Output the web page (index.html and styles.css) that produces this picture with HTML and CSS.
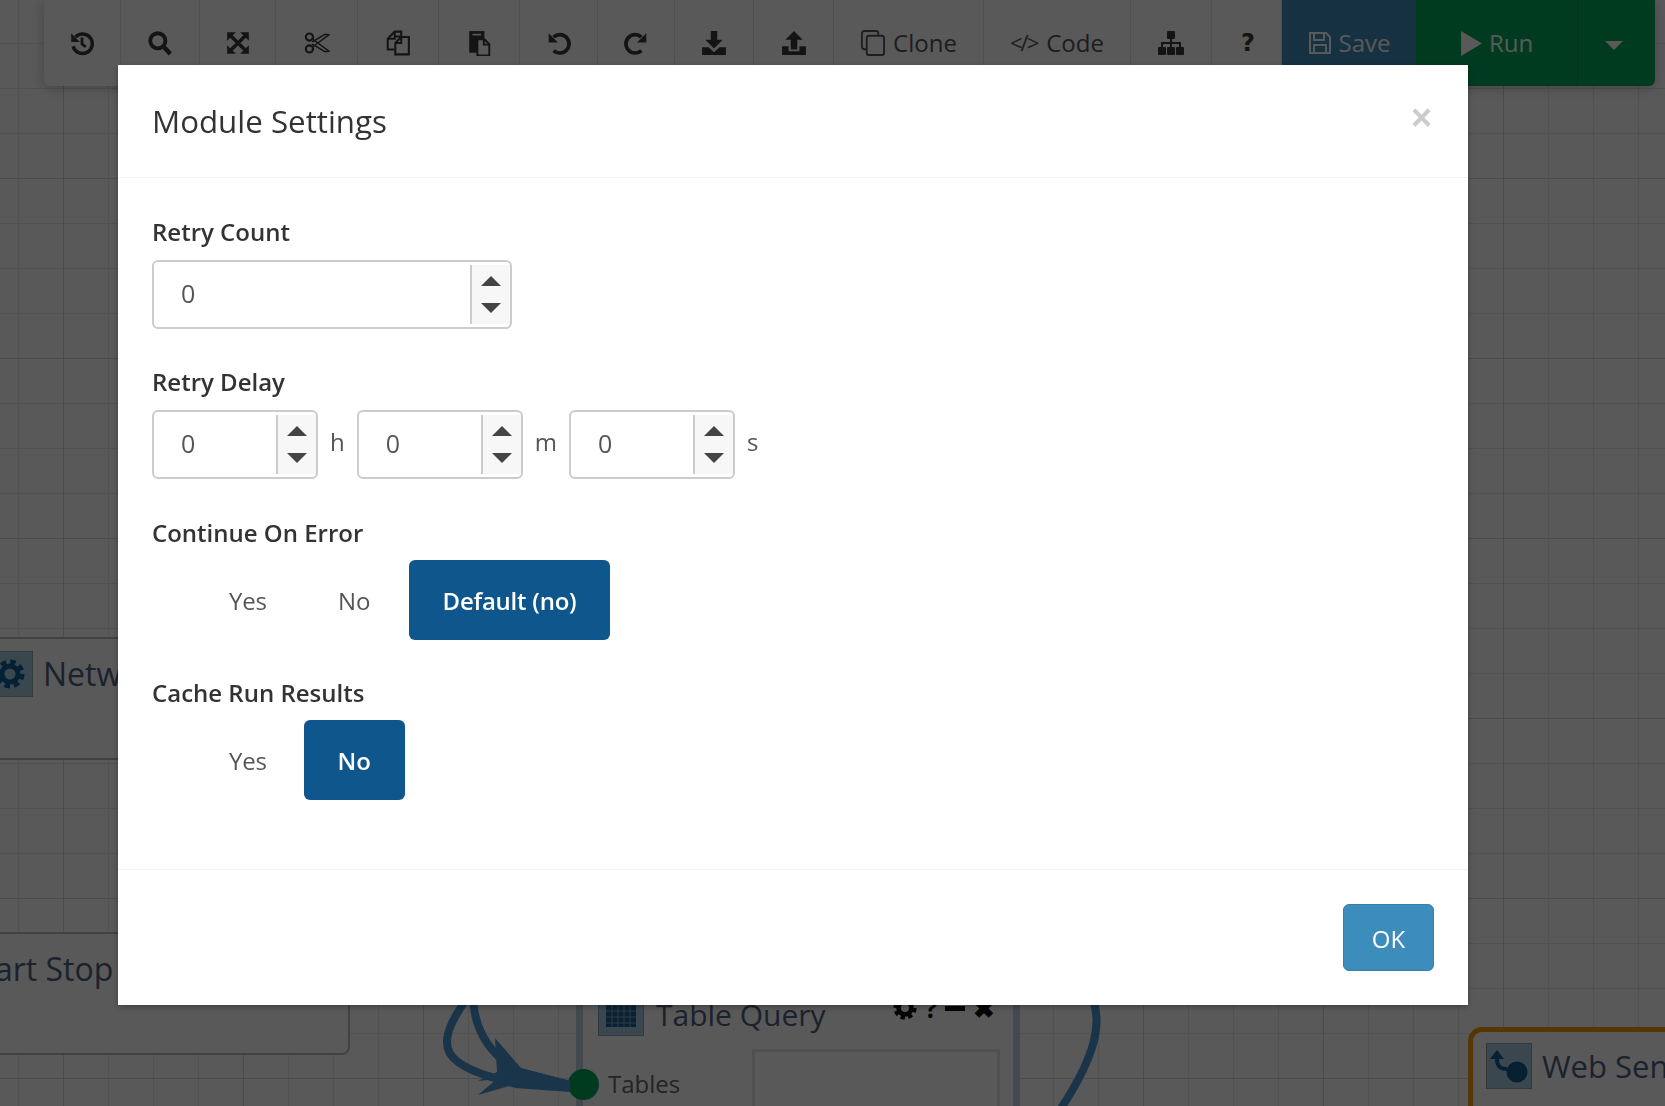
FILE: index.html
```html
<!DOCTYPE html>
<html lang="en">
<head>
    <meta charset="UTF-8">
    <meta name="viewport" content="width=device-width, initial-scale=1.0">
    <title>Module Settings</title>
    <link rel="stylesheet" href="styles.css">
</head>
<body>
    <div class="canvas">
        <svg class="wires" width="1665" height="1106" viewBox="0 0 1665 1106">
            <path d="M473 990C472 1020 482 1050 519 1072L570 1085" />
            <path d="M466 1000C448 1025 438 1048 458 1062C475 1074 495 1078 516 1084L570 1088" />
            <path d="M1088 990C1107 1020 1093 1060 1060 1110" />
            <polygon points="495,1038 521,1068 570,1081 570,1089 516,1084 478,1095 497,1079 478,1081 497,1072" />
        </svg>

        <div class="node node-network">
            <span class="node-icon">
                <svg width="30" height="30" viewBox="0 0 30 30"><circle cx="15" cy="15" r="8" fill="none" stroke="currentColor" stroke-width="5"/><circle cx="15" cy="15" r="12" fill="none" stroke="currentColor" stroke-width="5" stroke-dasharray="5.4 4"/></svg>
            </span>
            <span class="node-title">Network</span>
        </div>

        <div class="node node-start">
            <span class="node-title">Start Stop</span>
        </div>

        <div class="node node-query">
            <span class="node-icon">
                <svg width="32" height="30" viewBox="0 0 32 30"><rect x="1" y="1" width="30" height="28" fill="#1f5f96"/><path d="M1 7H31M1 13H31M1 19H31M1 25H31M7 1V29M13 1V29M19 1V29M25 1V29" stroke="#7fa6c8" stroke-width="1"/></svg>
            </span>
            <span class="node-title">Table Query</span>
            <span class="node-tools">
                <svg width="24" height="24" viewBox="0 0 30 30"><circle cx="15" cy="15" r="8" fill="none" stroke="currentColor" stroke-width="6"/><circle cx="15" cy="15" r="12" fill="none" stroke="currentColor" stroke-width="5" stroke-dasharray="5.4 4"/></svg>
                <b>?</b>
                <b class="tool-dash"></b>
                <b>&#10006;</b>
            </span>
            <div class="query-box"></div>
            <span class="port-label">Tables</span>
            <span class="port"></span>
        </div>

        <div class="node node-web">
            <span class="node-icon">
                <svg width="40" height="38" viewBox="0 0 40 38"><circle cx="28" cy="25" r="10.5" fill="#0b5c99"/><path d="M18 25H38M28 15C22 20 22 30 28 35M28 15C34 20 34 30 28 35" stroke="#3d5a70" fill="none"/><path d="M18 22C10 22 8 18 8 12" fill="none" stroke="#0b5c99" stroke-width="4"/><polygon points="1,12 8,3 15,12" fill="#0b5c99"/></svg>
            </span>
            <span class="node-title">Web Send</span>
        </div>
    </div>

    <nav class="toolbar">
        <button class="tool">
            <svg class="ic" viewBox="0 0 24 24"><path class="line" stroke-width="3.2" d="M6 6.5A9 9 0 1 1 3.8 15"/><path d="M2 3v8h8z"/><path class="line" stroke-width="2.6" d="M12 7v6l3.5 2.5"/></svg>
        </button>
        <button class="tool">
            <svg class="ic" viewBox="0 0 24 24"><circle class="line" stroke-width="3.6" cx="10" cy="10" r="7"/><path class="line" stroke-width="4.2" d="M15 15l6.5 7"/></svg>
        </button>
        <button class="tool">
            <svg class="ic" viewBox="0 0 24 24"><path d="M2 2h8L2 10zM22 2v8l-8-8zM2 22v-8l8 8zM22 22h-8l8-8z"/><path class="line" stroke-width="3.2" d="M5 5L19 19M19 5L5 19"/></svg>
        </button>
        <button class="tool">
            <svg class="ic" viewBox="0 0 24 24"><circle class="line" stroke-width="2" cx="5" cy="6.5" r="3.3"/><circle class="line" stroke-width="2" cx="5" cy="17.5" r="3.3"/><path class="line" stroke-width="1.3" d="M7.8 8.3L23 19.5l-3.5.5L7.5 13M7.8 15.7L23 4.5 19.5 4 7.5 11"/></svg>
        </button>
        <button class="tool">
            <svg class="ic" viewBox="0 0 24 24"><path class="line" stroke-width="1.9" d="M9 6H15V1.5H9L2.5 8V18H9M9 1.5V8H2.5"/><path class="line" stroke-width="1.9" d="M15 6.5H22V22.5H9.5V12zM15 6.5V12H9.5"/></svg>
        </button>
        <button class="tool">
            <svg class="ic" viewBox="0 0 24 24"><rect x="3" y="1" width="14" height="20"/><path d="M10.5 8.5h6.5l4.500 4.500v10.500h-11z" fill="#fff" stroke="currentColor" stroke-width="1.8"/><path d="M16.500 8.500v5h5" fill="none" stroke="currentColor" stroke-width="1.800"/><rect x="6" y="3.500" width="8" height="1.500" fill="#fff"/></svg>
        </button>
        <button class="tool">
            <svg class="ic" viewBox="0 0 24 24"><path class="line" stroke-width="3.4" d="M7 6.500A8.500 8.500 0 1 1 7 19"/><path d="M2.500 3v8.500h8.500z"/></svg>
        </button>
        <button class="tool">
            <svg class="ic" viewBox="0 0 24 24"><path class="line" stroke-width="3.4" d="M17 6.500A8.500 8.500 0 1 0 17 19"/><path d="M21.500 3v8.500H13z"/></svg>
        </button>
        <button class="tool">
            <svg class="ic" viewBox="0 0 24 24"><path d="M9 1h6v8h5l-8 8-8-8h5z"/><path d="M1 16h6l5 4.500 5-4.500h6v7H1z"/></svg>
        </button>
        <button class="tool">
            <svg class="ic" viewBox="0 0 24 24"><path d="M12 1l8 8h-5v9H9V9H4z"/><path d="M1 15h6v4.500h10V15h6v8H1z"/></svg>
        </button>
        <button class="tool">
            <svg class="ic" viewBox="0 0 25 27"><rect class="line" stroke-width="1.900" x="1" y="1" width="17" height="19" rx="2.500"/><rect x="6" y="6" width="18" height="20" rx="2.500" fill="#fff" stroke="currentColor" stroke-width="1.900"/></svg>
            <span>Clone</span>
        </button>
        <button class="tool">
            <span class="code-mark">&lt;/&gt;</span>
            <span>Code</span>
        </button>
        <button class="tool">
            <svg class="ic" viewBox="0 0 26 24"><rect x="9" y="0" width="8" height="8" rx="1"/><rect x="0" y="16" width="8" height="8" rx="1"/><rect x="9" y="16" width="8" height="8" rx="1"/><rect x="18" y="16" width="8" height="8" rx="1"/><path class="line" stroke-width="2" d="M4 16v-4h18v4M13 8v8"/></svg>
        </button>
        <button class="tool tool-help">?</button>
        <button class="tool tool-save">
            <svg class="ic" viewBox="0 0 24 24"><path class="line" stroke-width="2" d="M2 2H18L22 6V22H2z"/><path class="line" stroke-width="2" d="M6 2V9H16V2M6 22V14H18V22"/></svg>
            <span>Save</span>
        </button>
        <button class="tool tool-run">
            <svg class="ic ic-play" viewBox="0 0 20 24"><path d="M0 0l20 12L0 24z"/></svg>
            <span>Run</span>
        </button>
        <button class="tool tool-run">
            <span class="caret"></span>
        </button>
    </nav>

    <div class="backdrop">
        <section class="modal">
            <header class="modal-header">
                <h1>Module Settings</h1>
                <span class="close">&times;</span>
            </header>

            <form class="modal-body">
                <div class="field">
                    <label class="field-label">Retry Count</label>
                    <div class="number number-long">
                        <input type="number" value="0">
                        <span class="spin"><i class="up"></i><i class="down"></i></span>
                    </div>
                </div>

                <div class="field field-delay">
                    <label class="field-label">Retry Delay</label>
                    <div class="delay-row">
                        <div class="number">
                            <input type="number" value="0">
                            <span class="spin"><i class="up"></i><i class="down"></i></span>
                        </div>
                        <span class="unit">h</span>
                        <div class="number">
                            <input type="number" value="0">
                            <span class="spin"><i class="up"></i><i class="down"></i></span>
                        </div>
                        <span class="unit">m</span>
                        <div class="number">
                            <input type="number" value="0">
                            <span class="spin"><i class="up"></i><i class="down"></i></span>
                        </div>
                        <span class="unit">s</span>
                    </div>
                </div>

                <div class="field field-toggle">
                    <label class="field-label">Continue On Error</label>
                    <div class="toggle">
                        <a class="toggle-item">Yes</a>
                        <a class="toggle-item">No</a>
                        <a class="toggle-item active">Default (no)</a>
                    </div>
                </div>

                <div class="field field-toggle">
                    <label class="field-label">Cache Run Results</label>
                    <div class="toggle">
                        <a class="toggle-item">Yes</a>
                        <a class="toggle-item active">No</a>
                    </div>
                </div>
            </form>

            <footer class="modal-footer">
                <button class="btn-ok" type="button">OK</button>
            </footer>
        </section>
    </div>
</body>
</html>
```

FILE: styles.css
```css
* {
    box-sizing: border-box;
}

html, body {
    height: 100%;
}

body {
    margin: 0;
    overflow: hidden;
    font-family: "Open Sans", "Noto Sans", sans-serif;
    font-size: 24px;
    color: #333;
    background-color: #fff;
}

/* the flow canvas behind the dialog */
.canvas {
    position: absolute;
    top: 0;
    left: 0;
    width: 1665px;
    height: 1106px;
    overflow: hidden;
    background-color: #fff;
    background-image:
        linear-gradient(to right, #d8d8d8 1px, transparent 1px),
        linear-gradient(to bottom, #d8d8d8 1px, transparent 1px),
        linear-gradient(to right, #e8e8e8 1px, transparent 1px),
        linear-gradient(to bottom, #e8e8e8 1px, transparent 1px);
    background-size: 180px 180px, 180px 180px, 45px 45px, 45px 45px;
    background-position: 63px 0, 0 178px, 18px 0, 0 43px;
}

.wires {
    position: absolute;
    top: 0;
    left: 0;
    z-index: 2;
}

.wires path {
    fill: none;
    stroke: #4a98d1;
    stroke-width: 8;
}

.wires polygon {
    fill: #4a98d1;
}

.node {
    position: absolute;
    background-color: #fff;
    border: 2px solid #bbb;
    border-radius: 8px;
}

.node-title {
    position: absolute;
    font-size: 32px;
    line-height: 44px;
    color: #4f6185;
    white-space: nowrap;
}

.node-icon {
    position: absolute;
    display: flex;
    align-items: center;
    justify-content: center;
    width: 46px;
    height: 46px;
    background-color: #a9cbe3;
    border: 1px solid #8aa;
    color: #0b5c99;
}

.node-network {
    left: -60px;
    top: 637px;
    width: 300px;
    height: 123px;
}

.node-network .node-icon {
    left: 45px;
    top: 12px;
}

.node-network .node-title {
    left: 101px;
    top: 13px;
}

.node-start {
    left: -120px;
    top: 932px;
    width: 470px;
    height: 123px;
}

.node-start .node-title {
    left: 84px;
    top: 13px;
}

.node-query {
    left: 576px;
    top: 940px;
    width: 444px;
    height: 260px;
    border: 7px solid #bfd3e3;
    border-radius: 0;
    z-index: 1;
}

.node-query .node-icon {
    left: 15px;
    top: 43px;
}

.node-query .node-title {
    left: 73px;
    top: 46px;
    font-size: 30px;
}

.node-tools {
    position: absolute;
    left: 310px;
    top: 49px;
    display: flex;
    align-items: center;
    gap: 8px;
    font-size: 26px;
    line-height: 24px;
    color: #111;
}

.tool-dash {
    width: 20px;
    height: 5px;
    background-color: #111;
}

.query-box {
    position: absolute;
    left: 169px;
    top: 102px;
    width: 248px;
    height: 120px;
    border: 3px solid #e4e4e4;
}

.port-label {
    position: absolute;
    left: 25px;
    top: 120px;
    font-size: 24px;
    line-height: 34px;
    color: #666;
}

.port {
    position: absolute;
    left: -15px;
    top: 122px;
    width: 31px;
    height: 31px;
    border-radius: 50%;
    background-color: #00a65a;
    z-index: 3;
}

.node-web {
    left: 1468px;
    top: 1027px;
    width: 400px;
    height: 200px;
    border: 5px solid #f39c12;
    border-radius: 14px;
}

.node-web .node-icon {
    left: 13px;
    top: 11px;
}

.node-web .node-title {
    left: 69px;
    top: 12px;
    font-size: 31px;
}

/* top toolbar */
.toolbar {
    position: relative;
    display: grid;
    grid-template-columns: 77px 79px 76px 82px 81px 81px 78px 77px 79px 80px 150px 147px 81px 70px 134px 162px 77px;
    width: 1611px;
    height: 86px;
    margin-left: 44px;
    background-color: #fff;
    border-radius: 0 0 6px 6px;
    box-shadow: 0 2px 12px rgba(0, 0, 0, 0.25);
}

.tool {
    display: flex;
    align-items: center;
    justify-content: center;
    gap: 7px;
    padding: 0;
    font-family: inherit;
    font-size: 24px;
    color: #555;
    background: none;
    border: 0;
    border-right: 1px solid #e4e4e4;
}

.tool span {
    margin-bottom: 2px;
}

.tool:nth-child(-n+10),
.tool:nth-child(13) {
    color: #3a3a3a;
}

.ic {
    width: 26px;
    height: 26px;
    fill: currentColor;
}

.ic .line {
    fill: none;
    stroke: currentColor;
}

.code-mark {
    font-size: 22px;
    letter-spacing: -2px;
    padding-right: 2px;
}

.tool-help {
    padding-left: 3px;
    font-family: "DejaVu Sans", sans-serif;
    font-size: 24px;
    font-weight: 700;
    color: #3a3a3a;
}

.tool-save {
    color: #fff;
    background-color: #3c8dbc;
    border-right: 0;
}

.tool-save .ic {
    width: 24px;
    height: 24px;
}

.tool-run {
    color: #fff;
    background-color: #00a65a;
    border-right: 1px solid #008d4c;
}

.tool-run .ic-play {
    width: 21px;
    height: 25px;
    margin-left: 3px;
}

.tool-run span {
    margin-right: 2px;
}

.tool-run:last-child {
    padding-right: 6px;
    border-right: 0;
    border-radius: 0 0 6px 0;
}

.tool .caret {
    border-top: 9px solid #fff;
    border-left: 9px solid transparent;
    border-right: 9px solid transparent;
    margin: 5px 0 0;
}

/* dialog */
.backdrop {
    position: fixed;
    top: 0;
    left: 0;
    right: 0;
    bottom: 0;
    z-index: 10;
    padding: 65px 0 0 118px;
    background-color: rgba(0, 0, 0, 0.65);
}

.modal {
    width: 1350px;
    background-color: #fff;
    box-shadow: 0 2px 6px rgba(0, 0, 0, 0.3);
}

.modal-header {
    position: relative;
    height: 113px;
    padding: 35px 34px 0;
    border-bottom: 1px solid #f4f4f4;
}

.modal-header h1 {
    margin: 0;
    font-size: 31.300px;
    font-weight: 400;
    line-height: 42px;
    color: #333;
}

.close {
    position: absolute;
    top: 23px;
    right: 36px;
    font-family: "Liberation Sans", sans-serif;
    font-size: 36px;
    font-weight: 700;
    line-height: 60px;
    color: #ccc;
}

.modal-body {
    height: 691px;
    padding: 37px 34px 0;
}

.field {
    margin-bottom: 36px;
}

.field-delay {
    margin-bottom: 37px;
}

.field-toggle {
    margin-bottom: 36px;
}

.field-label {
    display: block;
    margin-bottom: 11px;
    font-weight: 600;
    line-height: 34px;
    color: #333;
}

.field-toggle .field-label {
    margin-bottom: 10px;
}

.number {
    display: flex;
    width: 166px;
    height: 69px;
    padding: 3px 0;
    background-color: #fff;
    border: 2px solid #ccc;
    border-radius: 6px;
}

.number-long {
    width: 360px;
}

.number input {
    flex: 1;
    min-width: 0;
    padding: 0 0 4px 27px;
    font-family: inherit;
    font-size: 25px;
    color: #555;
    background: none;
    border: 0;
    outline: 0;
    appearance: textfield;
}

.spin {
    display: flex;
    flex-direction: column;
    align-items: center;
    justify-content: center;
    gap: 17px;
    width: 40px;
    background-color: #f7f7f7;
    border-left: 2px solid #ccc;
}

.spin i {
    display: block;
    border-left: 10px solid transparent;
    border-right: 10px solid transparent;
}

.spin .up {
    border-bottom: 10px solid #444;
}

.spin .down {
    border-top: 10px solid #444;
}

.delay-row {
    display: flex;
    align-items: center;
}

.unit {
    padding: 0 12px 6px;
    color: #555;
}

.toggle {
    display: flex;
    gap: 4px;
    margin-left: 44px;
}

.toggle-item {
    min-width: 101px;
    height: 80px;
    padding: 0 33px;
    line-height: 81px;
    text-align: center;
    letter-spacing: -0.25px;
    color: #555;
    border-radius: 6px;
}

.toggle-item.active {
    padding: 0 34px;
    font-weight: 600;
    color: #fff;
    background-color: #0f568c;
}

.modal-footer {
    display: flex;
    justify-content: flex-end;
    height: 136px;
    padding: 34px 34px 0;
    border-top: 1px solid #f4f4f4;
}

.btn-ok {
    width: 91px;
    height: 67px;
    padding-top: 3px;
    font-family: inherit;
    font-size: 24px;
    color: #fff;
    background-color: #3c8dbc;
    border: 1px solid #367fa9;
    border-radius: 6px;
}
```
